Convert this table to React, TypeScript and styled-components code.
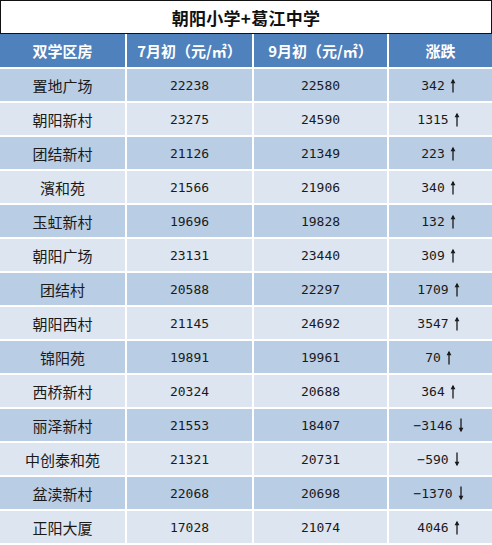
import React from "react";
import styled, { createGlobalStyle } from "styled-components";

const Global = createGlobalStyle`
  html, body { margin: 0; padding: 0; background: #ffffff; }
  body { font-family: "Noto Sans CJK SC", "Noto Sans", sans-serif; }
`;

const Page = styled.div`
  width: 492px;
  background: #ffffff;
`;

const Title = styled.div`
  box-sizing: border-box;
  height: 34px;
  border: 1px solid #111;
  display: flex;
  align-items: center;
  justify-content: center;
  font-family: "Noto Sans CJK SC", sans-serif;
  font-weight: 700;
  font-size: 17px;
  color: #111;
  letter-spacing: 0.3px;
`;

const Grid = styled.div`
  display: grid;
  grid-template-columns: 125px 125px 133px 1fr;
  column-gap: 2px;
  row-gap: 2px;
  background: #ffffff;
`;

const HeadCell = styled.div`
  height: 33px;
  background: #4f81bd;
  color: #ffffff;
  display: flex;
  align-items: center;
  justify-content: center;
  font-family: "Noto Sans CJK SC", sans-serif;
  font-weight: 700;
  font-size: 15px;
`;

const Cell = styled.div<{ $odd: boolean; $num?: boolean }>`
  height: 32px;
  background: ${(p) => (p.$odd ? "#b9cde5" : "#dde5f0")};
  display: flex;
  align-items: center;
  justify-content: center;
  color: #1a1a1a;
  font-family: ${(p) =>
    p.$num ? '"DejaVu Sans Mono", "Liberation Mono", monospace' : '"Noto Sans CJK SC", sans-serif'};
  font-size: ${(p) => (p.$num ? "13px" : "15px")};
`;

const Change = styled.span`
  display: inline-flex;
  align-items: center;
  gap: 5px;
  margin-right: 4px;
`;

const ArrowSvg = styled.svg`
  width: 6px;
  height: 15px;
  display: block;
`;

function Arrow({ up }: { up: boolean }) {
  return (
    <ArrowSvg viewBox="0 0 6 15">
      {up ? (
        <>
          <line x1="3" y1="2" x2="3" y2="14.5" stroke="#1a1a1a" strokeWidth="1.3" />
          <path d="M0.6 5.2 L3 0.8 L5.4 5.2 Z" fill="#1a1a1a" />
        </>
      ) : (
        <>
          <line x1="3" y1="0.5" x2="3" y2="13" stroke="#1a1a1a" strokeWidth="1.3" />
          <path d="M0.6 9.8 L3 14.2 L5.4 9.8 Z" fill="#1a1a1a" />
        </>
      )}
    </ArrowSvg>
  );
}

const rows: [string, number, number, number][] = [
  ["置地广场", 22238, 22580, 342],
  ["朝阳新村", 23275, 24590, 1315],
  ["团结新村", 21126, 21349, 223],
  ["濱和苑", 21566, 21906, 340],
  ["玉虹新村", 19696, 19828, 132],
  ["朝阳广场", 23131, 23440, 309],
  ["团结村", 20588, 22297, 1709],
  ["朝阳西村", 21145, 24692, 3547],
  ["锦阳苑", 19891, 19961, 70],
  ["西桥新村", 20324, 20688, 364],
  ["丽泽新村", 21553, 18407, -3146],
  ["中创泰和苑", 21321, 20731, -590],
  ["盆渎新村", 22068, 20698, -1370],
  ["正阳大厦", 17028, 21074, 4046],
];

const fmt = (n: number) => (n < 0 ? "\u2212" + Math.abs(n) : String(n));

export default function App() {
  return (
    <Page>
      <Global />
      <Title>朝阳小学+葛江中学</Title>
      <Grid>
        <HeadCell>双学区房</HeadCell>
        <HeadCell>7月初（元/㎡）</HeadCell>
        <HeadCell>9月初（元/㎡）</HeadCell>
        <HeadCell>涨跌</HeadCell>
        {rows.map(([name, a, b, d], i) => {
          const odd = i % 2 === 0;
          return (
            <React.Fragment key={name}>
              <Cell $odd={odd}>{name}</Cell>
              <Cell $odd={odd} $num>{a}</Cell>
              <Cell $odd={odd} $num>{b}</Cell>
              <Cell $odd={odd} $num>
                <Change>
                  {fmt(d)}
                  <Arrow up={d > 0} />
                </Change>
              </Cell>
            </React.Fragment>
          );
        })}
      </Grid>
    </Page>
  );
}
